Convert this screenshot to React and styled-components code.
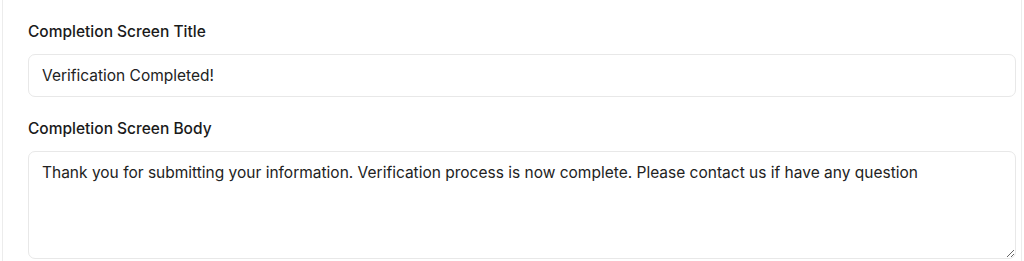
import React from 'react';
import styled, { createGlobalStyle } from 'styled-components';

const GlobalStyle = createGlobalStyle`
  html, body {
    margin: 0;
    padding: 0;
    background: #ffffff;
  }
  body {
    font-family: Inter, "Noto Sans", sans-serif;
    color: #1f1f1f;
  }
`;

const Page = styled.div`
  padding: 0 2px;
  height: 261px;
  overflow: hidden;
`;

const Card = styled.div`
  border-left: 1px solid #ececec;
  border-right: 1px solid #ececec;
  padding: 22px 5px 0 25px;
  display: flex;
  flex-direction: column;
  gap: 22px;
  height: 100%;
  box-sizing: border-box;
`;

const Field = styled.div`
  display: flex;
  flex-direction: column;
  gap: 12px;
`;

const Label = styled.label`
  font-size: 15.5px;
  font-weight: 500;
  line-height: 20px;
  color: #1a1a1a;
`;

const TextInput = styled.input`
  height: 43px;
  box-sizing: border-box;
  border: 1px solid #e8e8e8;
  border-radius: 7px;
  padding: 0 13px;
  font-family: inherit;
  font-size: 15.5px;
  color: #222222;
  background: #fff;
  outline: none;
`;

const TextArea = styled.textarea`
  height: 108px;
  box-sizing: border-box;
  border: 1px solid #e8e8e8;
  border-radius: 7px;
  padding: 10px 13px;
  font-family: inherit;
  font-size: 15.5px;
  line-height: 22px;
  color: #222222;
  background: #fff;
  outline: none;
  resize: vertical;
`;

export default function App() {
  return (
    <>
      <GlobalStyle />
      <Page>
        <Card>
          <Field>
            <Label>Completion Screen Title</Label>
            <TextInput defaultValue="Verification Completed!" />
          </Field>
          <Field>
            <Label>Completion Screen Body</Label>
            <TextArea defaultValue="Thank you for submitting your information. Verification process is now complete. Please contact us if have any question" />
          </Field>
        </Card>
      </Page>
    </>
  );
}
